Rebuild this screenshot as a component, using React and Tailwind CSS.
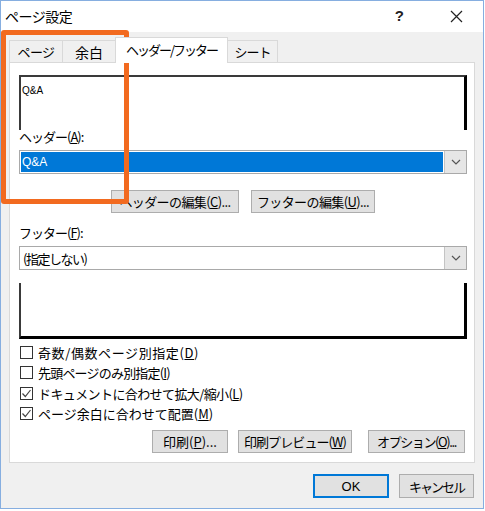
import React from 'react';

const font = "font-['Noto_Sans_CJK_JP','Noto_Sans',sans-serif]";

const Chevron = () => (
  <svg width="10" height="6" viewBox="0 0 10 6" fill="none">
    <polyline points="1,1 5,5 9,1" stroke="#555" strokeWidth="1.2" />
  </svg>
);

const Combo = ({ value, selected }) => (
  <div className="flex h-[24px] border border-[#a9a9a9] bg-white">
    <div className="flex-1 p-[1px]">
      <div
        className={`h-full flex items-center pl-[1px] text-[13px] leading-none ${
          selected ? 'bg-[#0078d7] text-white' : 'text-black pl-[2px]'
        }`}
      >
        {value}
      </div>
    </div>
    <div className="w-[22px] flex items-center justify-center bg-[#e6e6e6] border-l border-[#c4c4c4]">
      <Chevron />
    </div>
  </div>
);

const Btn = ({ children, className = '' }) => (
  <button
    className={`h-[23px] flex items-center justify-center whitespace-nowrap bg-[#e1e1e1] border border-[#adadad] text-[13px] text-black leading-none ${className}`}
  >
    {children}
  </button>
);

const Check = ({ checked, children, className = '' }) => (
  <div className="h-[20.5px] flex items-center">
    <div className="w-[13px] h-[13px] ml-[1px] border border-[#333] bg-white flex items-center justify-center">
      {checked && (
        <svg width="11" height="11" viewBox="0 0 11 11" fill="none">
          <polyline points="1.5,5.5 4.3,8.5 9.5,2" stroke="#444" strokeWidth="1.2" />
        </svg>
      )}
    </div>
    <span className={`ml-[5px] text-[13px] leading-none text-black ${className}`}>{children}</span>
  </div>
);

const Tab = ({ children, active, w, className = '' }) => (
  <div
    className={`${w} flex items-center justify-center whitespace-nowrap border border-b-0 border-[#d9d9d9] -ml-px first:ml-0 text-[13px] leading-none text-black ${className} ${
      active ? 'h-[26px] bg-white relative z-10 -mb-px pb-[3px]' : 'h-[22px] bg-[#f0f0f0]'
    }`}
  >
    {children}
  </div>
);

export default function App() {
  return (
    <div className={`w-[485px] h-[511px] bg-white relative ${font}`}>
      <div className="w-[484px] h-[509px] border border-[#86aee0] bg-[#f0f0f0] flex flex-col">
        {/* title bar */}
        <div className="h-[31px] bg-white flex items-center">
          <span className="pl-[4px] text-[14px] text-black tracking-[-0.5px]">ページ設定</span>
          <span className="ml-auto mr-[46px] text-[15px] font-bold text-[#222] font-['Liberation_Sans',sans-serif]">?</span>
          <svg className="mr-[20px]" width="13" height="13" viewBox="0 0 13 13">
            <path d="M1 1 L12 12 M12 1 L1 12" stroke="#222" strokeWidth="1.2" />
          </svg>
        </div>

        <div className="flex flex-col px-[8px] pt-[5px]">
          {/* tabs */}
          <div className="flex items-end">
            <Tab w="w-[54px]" className="tracking-[-0.5px]">ページ</Tab>
            <Tab w="w-[54px]" className="text-[14px]">余白</Tab>
            <Tab w="w-[113px]" className="tracking-[-2px]" active>ヘッダー/フッター</Tab>
            <Tab w="w-[51px]" className="tracking-[-1px]">シート</Tab>
          </div>

          {/* panel */}
          <div className="h-[401px] bg-white border border-[#d9d9d9] pl-[9px] pr-[7px] pt-[12px] flex flex-col">
            <div className="h-[55px] border-t-2 border-l-2 border-r-[3px] border-[#3a3a3a] border-r-black pt-[8px] pl-[1px] text-[10px] leading-[12px] font-['Liberation_Sans',sans-serif] text-black">
              Q&amp;A
            </div>

            <div className="h-[20px] leading-[14px] text-[13px] text-black tracking-[-1px]">
              ヘッダー(<u>A</u>):
            </div>
            <Combo value={<span className="font-['Liberation_Sans',sans-serif] text-[12px]">Q&amp;A</span>} selected />

            <div className="flex justify-center gap-[12px] mt-[16px]">
              <Btn className="w-[128px] tracking-[-0.6px]">ヘッダーの編集(<u>C</u>)...</Btn>
              <Btn className="w-[124px] tracking-[-0.6px]">フッターの編集(<u>U</u>)...</Btn>
            </div>

            <div className="h-[20px] leading-[14px] text-[13px] text-black mt-[13px] tracking-[-1px]">
              フッター(<u>F</u>):
            </div>
            <Combo value={<span className="tracking-[-1.5px]">(指定しない)</span>} />

            <div className="h-[56px] mt-[13px] border-l-2 border-r-[3px] border-b-[3px] border-[#3a3a3a] border-r-black border-b-black" />

            <div className="mt-[3px] flex flex-col">
              <Check className="tracking-[0.6px]">奇数/偶数ページ別指定(<u>D</u>)</Check>
              <Check className="tracking-[-0.8px]">先頭ページのみ別指定(<u>I</u>)</Check>
              <Check className="tracking-[-0.6px]" checked>ドキュメントに合わせて拡大/縮小(<u>L</u>)</Check>
              <Check checked>ページ余白に合わせて配置(<u>M</u>)</Check>
            </div>

            <div className="flex justify-end mt-[6px] pr-[2px]">
              <Btn className="w-[76px]">印刷(<u>P</u>)...</Btn>
              <Btn className="w-[114px] ml-[10px] tracking-[-0.9px]">印刷プレビュー(<u>W</u>)</Btn>
              <Btn className="w-[97px] ml-[16px] tracking-[-1.4px]">オプション(<u>O</u>)...</Btn>
            </div>
          </div>
        </div>

        {/* dialog buttons */}
        <div className="flex justify-end pr-[9px] mt-[11px]">
          <button className="w-[76px] h-[24px] bg-[#e1e1e1] border-2 border-[#0078d7] text-[13px] text-black leading-none font-['Liberation_Sans',sans-serif]">
            OK
          </button>
          <Btn className="w-[75px] ml-[10px] h-[24px] tracking-[-2px]">キャンセル</Btn>
        </div>
      </div>

      {/* highlight overlay */}
      <div className="absolute left-[1px] top-[30px] w-[128px] h-[174px] border-[5px] border-[#f26a1f] rounded-[3px] pointer-events-none" />
    </div>
  );
}
